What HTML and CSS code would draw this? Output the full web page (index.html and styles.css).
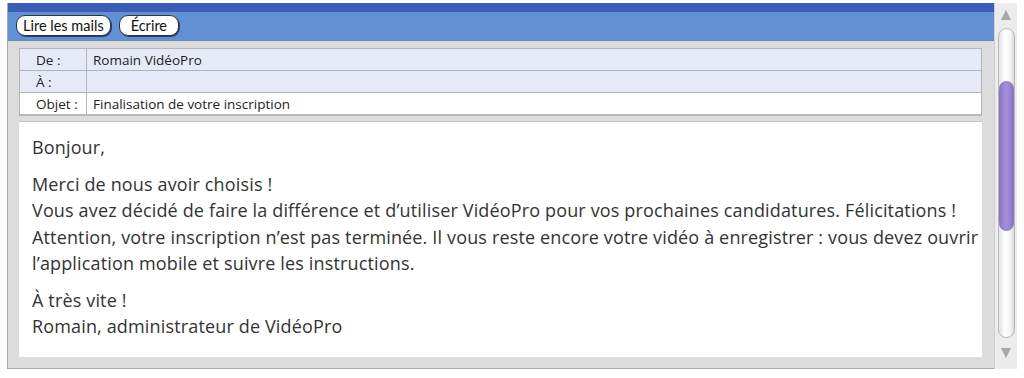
FILE: index.html
```html
<!DOCTYPE html>
<html lang="fr">
<head>
<meta charset="utf-8">
<title>Mail</title>
<link rel="stylesheet" href="styles.css">
</head>
<body>
<div class="window">
  <div class="main">
    <div class="toolbar">
      <button class="btn">Lire les mails</button>
      <button class="btn wide">Écrire</button>
    </div>
    <div class="content">
      <div class="headers">
        <div class="row tint"><span class="label">De :</span><span class="value">Romain VidéoPro</span></div>
        <div class="row tint"><span class="label">À :</span><span class="value"></span></div>
        <div class="row"><span class="label">Objet :</span><span class="value">Finalisation de votre inscription</span></div>
      </div>
      <div class="message">
        <p>Bonjour,</p>
        <p>Merci de nous avoir choisis !<br>Vous avez décidé de faire la différence et d’utiliser VidéoPro pour vos prochaines candidatures. Félicitations !<br>Attention, votre inscription n’est pas terminée. Il vous reste encore votre vidéo à enregistrer : vous devez ouvrir<br>l’application mobile et suivre les instructions.</p>
        <p>À très vite !<br>Romain, administrateur de VidéoPro</p>
      </div>
    </div>
  </div>
  <div class="scrollbar">
    <span class="arrow up"></span>
    <div class="track"><div class="thumb"></div></div>
    <span class="arrow down"></span>
  </div>
</div>
</body>
</html>
```
FILE: styles.css
```css
html, body { margin: 0; padding: 0; background: #fff; }
body { font-family: "Open Sans", sans-serif; }

.window {
  display: flex;
  margin: 3px 0 0 7px;
  width: 1010px;
  height: 366px;
}

.main {
  width: 986px;
  display: flex;
  flex-direction: column;
  border-left: 1px solid #a9a9a9;
  border-bottom: 1px solid #a9a9a9;
  background: #dcdcdc;
}

.toolbar {
  height: 29px;
  border-top: 9px solid #3b5db5;
  background: #6290d4;
  display: flex;
  align-items: center;
  gap: 8px;
  padding-left: 8px;
  box-shadow: inset 0 -5px 0 -4px #5f8fa6;
}

.btn {
  font-family: Lato, sans-serif;
  font-size: 14.5px;
  color: #111;
  background: #fff;
  border: 1px solid #333;
  border-radius: 9px;
  height: 21px;
  padding: 0 6px;
  line-height: 18px;
  box-shadow: 1px 1px 0 #2a3e70;
  margin-top: -2px;
}
.btn.wide { padding: 0 11px; }

.content {
  flex: 1;
  padding: 7px 12px 11px 11px;
  display: flex;
  flex-direction: column;
  gap: 5px;
}

.headers {
  border: 1px solid #b4b4bc;
  border-bottom: 2px solid #b8b8b8;
  background: #fff;
  font-family: "Open Sans", sans-serif;
  font-size: 13.5px;
  color: #222;
}

.row {
  display: flex;
  height: 21px;
  align-items: stretch;
  border-top: 1px solid #b4b4bc;
}
.row:first-child { border-top: none; }
.row.tint { background: #e6eaf6; }

.label {
  width: 50px;
  padding-left: 16px;
  border-right: 1px solid #b4b4bc;
  display: flex;
  align-items: center;
}
.value {
  padding-left: 6px;
  display: flex;
  align-items: center;
}

.message {
  flex: 1;
  background: #fff;
  border-top: 1px solid #c4c4c4;
  padding: 12px 2px 0 13px;
  font-size: 18px;
  line-height: 26.5px;
  letter-spacing: 0.15px;
  white-space: nowrap;
  color: #333;
}
.message p { margin: 0 0 10px 0; }

.scrollbar {
  width: 22px;
  background: #ececec;
  border-left: 1px solid #d0d0d0;
  display: flex;
  flex-direction: column;
  align-items: center;
}

.arrow {
  width: 0; height: 0;
  border-left: 5px solid transparent;
  border-right: 5px solid transparent;
}
.arrow.up { border-bottom: 10px solid #a8a8a8; margin: 7px 0 8px; }
.arrow.down { border-top: 10px solid #a8a8a8; margin: 10px 0 0; }

.track {
  width: 17px;
  height: 310px;
  border: 1px solid #b8b8b8;
  border-radius: 9px;
  background: linear-gradient(to right, #e2e2e2, #ffffff 40%, #f2f2f2 80%, #d8d8d8);
  box-sizing: border-box;
  padding-top: 52px;
  display: flex;
  justify-content: center;
}

.thumb {
  width: 15px;
  height: 150px;
  border-radius: 8px;
  background: linear-gradient(to right, #8d74c8, #a58fda 45%, #9a82d2 80%, #8a70c4);
  border: 1px solid #8a76b8;
  box-sizing: border-box;
}
```
